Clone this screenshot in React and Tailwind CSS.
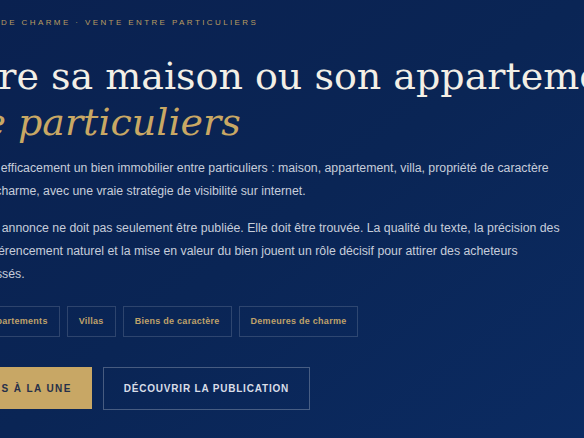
export default function App() {
  const chips = ["Maisons", "Appartements", "Villas", "Biens de caractère", "Demeures de charme"];
  return (
    <div className="w-[584px] h-[438px] overflow-hidden bg-gradient-to-br from-[#0a2150] via-[#0a2555] to-[#0b2b62]">
      <div className="-ml-[97px] pt-[18px] w-[740px]">
        <div className="text-[8px] leading-[10px] tracking-[0.3em] text-[#b99c61] font-['Liberation_Sans',Arial,sans-serif] whitespace-nowrap">
          APPARTEMENTS DE CHARME · VENTE ENTRE PARTICULIERS
        </div>
        <h1 className="mt-[25px] text-[38px] leading-[46px] text-[#f3efe6] font-['DejaVu_Serif',Georgia,serif] whitespace-nowrap">
          <span className="block">Vendre sa maison ou son appartement</span>
          <span className="block italic text-[#c9a864]">entre particuliers</span>
        </h1>
        <div className="mt-[12px] w-[660px] text-[12.3px] leading-[23px] text-[#c6cdda] font-['Liberation_Sans',Arial,sans-serif]">
          <p>
            Comment vendre efficacement un bien immobilier entre particuliers : maison, appartement, villa, propriété de caractère
            ou demeures de charme, avec une vraie stratégie de visibilité sur internet.
          </p>
          <p className="mt-[14px]">
            Aujourd'hui, votre annonce ne doit pas seulement être publiée. Elle doit être trouvée. La qualité du texte, la précision des
            photos, le bon référencement naturel et la mise en valeur du bien jouent un rôle décisif pour attirer des acheteurs
            qualifiés et intéressés.
          </p>
        </div>
        <div className="mt-[20px] flex gap-[7px] font-['Liberation_Sans',Arial,sans-serif]">
          {chips.map((c) => (
            <span
              key={c}
              className="h-[31px] px-[11px] flex items-center border border-white/15 text-[9px] font-bold tracking-[0.03em] text-[#bfa16a] whitespace-nowrap"
            >
              {c}
            </span>
          ))}
        </div>
        <div className="mt-[30px] flex gap-[11px] font-['Liberation_Sans',Arial,sans-serif]">
          <button className="h-[42px] px-5 bg-[#c8a765] text-[#26304a] text-[10px] font-bold tracking-[0.14em] whitespace-nowrap">
            NOS MAISONS À LA UNE
          </button>
          <button className="h-[43px] px-5 border border-white/25 text-[#d9dde7] text-[10px] font-bold tracking-[0.08em] whitespace-nowrap">
            DÉCOUVRIR LA PUBLICATION
          </button>
        </div>
      </div>
    </div>
  );
}
